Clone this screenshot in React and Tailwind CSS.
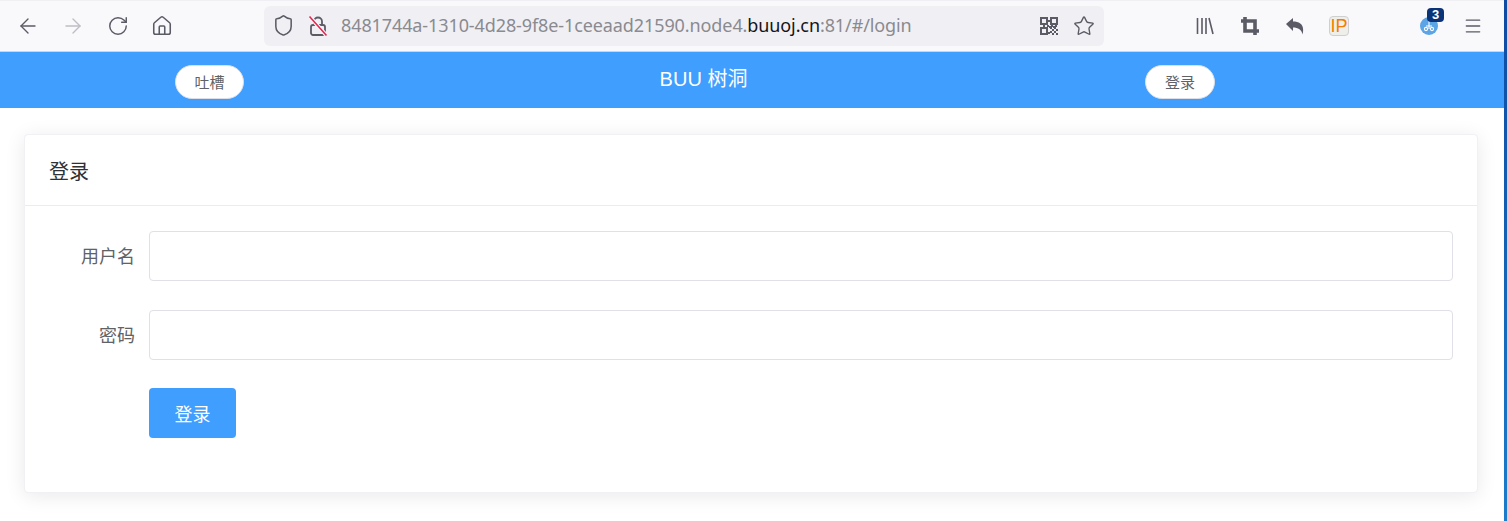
import React from 'react';
import { ArrowLeft, ArrowRight, RotateCw, House, Shield, Star, Menu } from 'lucide-react';

const cjk = "font-['Noto_Sans_CJK_SC','Noto_Sans',sans-serif]";

function LockOff() {
  return (
    <svg width="20" height="22" viewBox="0 0 20 22" fill="none">
      <path d="M6 9V6.5a4 4 0 0 1 8 0V9" stroke="#5b5b66" strokeWidth="1.8" />
      <rect x="3" y="10" width="14" height="10" rx="2" stroke="#5b5b66" strokeWidth="1.8" />
      <path d="M2 2l16 18" stroke="#f7f7fa" strokeWidth="4" />
      <path d="M1.5 1.5l17 19" stroke="#e22850" strokeWidth="1.6" />
    </svg>
  );
}

function QrCode() {
  return (
    <svg width="18" height="18" viewBox="0 0 18 18" fill="#5b5b66">
      <path fillRule="evenodd" d="M0 0h8v8H0zM2 2v4h4V2zM10 0h8v8h-8zM12 2v4h4V2zM0 10h8v8H0zM2 12v4h4v-4z" />
      <path d="M8 3h2v2H8zM3 8h2v2H3zM7 8h2v2H7zM11 8h2v2h-2zM15 8h2v2h-2zM9 9h2v2H9zM13 9h2v2h-2zM10 10h2v2h-2zM14 10h2v2h-2zM12 12h2v2h-2zM16 12h2v2h-2zM10 14h2v2h-2zM14 14h2v2h-2zM12 16h2v2h-2zM16 16h2v2h-2zM8 15h2v2H8z" />
    </svg>
  );
}

function Library() {
  return (
    <svg width="18" height="18" viewBox="0 0 18 18" fill="none" stroke="#5b5b66" strokeWidth="1.6">
      <path d="M1.5 1v16M6 1v16M10 1v16M13 1l4 16" />
    </svg>
  );
}

function Crop() {
  return (
    <svg width="18" height="18" viewBox="0 0 18 18" fill="none" stroke="#5b5b66" strokeWidth="3.6">
      <path d="M0 4h14v14M4 0v14h14" />
    </svg>
  );
}

function Back() {
  return (
    <svg width="18" height="18" viewBox="0 0 18 18" fill="#5b5b66">
      <path d="M0 7L7 1v3.500C14 4.500 19 8 16.500 17.500 16 13 12 10.500 7 10.500V14z" />
    </svg>
  );
}

function Extension() {
  return (
    <div className="relative w-[18px] h-[18px] rounded-full bg-[#5ba4e6]">
      <svg width="18" height="18" viewBox="0 0 18 18" fill="none" stroke="#ffffff" strokeWidth="1.1">
        <path d="M9 4v8M6 9h6" />
        <circle cx="6" cy="12" r="1.600" />
        <circle cx="12" cy="12" r="1.600" />
      </svg>
      <span className="absolute -top-[9px] left-[7px] w-[17px] h-[14px] rounded-sm bg-[#0b3478] text-white text-[13px] leading-[14px] font-bold text-center font-['Liberation_Sans',sans-serif]">3</span>
    </div>
  );
}

function Toolbar() {
  return (
    <div className="h-[52px] flex items-center bg-[#f9f9fb] border-t border-t-[#f0f0f4] border-b border-b-[#d4d4d8] text-[#5b5b66]">
      <div className="w-[264px] flex items-center pl-[16px] gap-[21px] shrink-0">
        <ArrowLeft size={24} strokeWidth={1.4} />
        <ArrowRight size={24} strokeWidth={1.4} className="text-[#bdbdc4]" />
        <RotateCw size={22} strokeWidth={1.6} className="ml-[1px]" />
        <House size={22} strokeWidth={1.7} className="ml-[1px]" />
      </div>
      <div className="w-[840px] h-[40px] -mt-[1px] bg-[#f0f0f4] rounded-md flex items-center shrink-0">
        <Shield size={23} strokeWidth={1.6} className="ml-[8px]" />
        <div className="ml-[13px] flex"><LockOff /></div>
        <div className="ml-[13px] text-[18px] whitespace-nowrap text-[#8a8a90] font-['Noto_Sans',sans-serif] tracking-[-0.1px]">
          8481744a-1310-4d28-9f8e-1ceeaad21590.node4.<span className="text-[#15141a]">buuoj.cn</span>:81/#/login
        </div>
        <div className="ml-auto mr-[9px] flex items-center gap-[15px]">
          <QrCode />
          <Star size={22} strokeWidth={1.5} />
        </div>
      </div>
      <div className="flex items-center pl-[92px] gap-[27px]">
        <Library />
        <Crop />
        <Back />
        <div className="-ml-[2px] w-[20px] h-[20px] rounded-sm border border-[#cfcfcf] bg-[#efefe9] flex items-center justify-center text-[#f57c00] text-[18px] leading-none font-['Liberation_Sans',sans-serif]">IP</div>
      </div>
      <div className="ml-[71px]"><Extension /></div>
      <Menu size={20} strokeWidth={1.6} className="ml-[25px]" />
    </div>
  );
}

function PillButton({ children, className }) {
  return (
    <button className={`h-[34px] rounded-[17px] bg-white border border-[#dcdfe6] text-[15px] text-[#606266] shrink-0 ${className}`}>
      {children}
    </button>
  );
}

function Field({ label }) {
  return (
    <div className="flex items-center">
      <label className="w-[110px] pr-[14px] text-right text-[18px] -mt-[2px] text-[#606266] shrink-0">{label}</label>
      <input className="flex-1 h-[50px] bg-white border border-[#dfe0e8] rounded-[4px] outline-none" />
    </div>
  );
}

export default function App() {
  return (
    <div className={`w-[1507px] h-[521px] overflow-hidden bg-white flex ${cjk}`}>
      <div className="w-[1504px] shrink-0">
        <Toolbar />
        <div className="h-[56px] bg-[#409eff] flex items-center">
          <PillButton className="w-[69px] ml-[175px] mt-[4px]">吐槽</PillButton>
          <div className="w-[901px] pl-[18px] text-center text-white text-[20px] font-['Liberation_Sans','Noto_Sans_CJK_SC',sans-serif] -mt-[2px]">BUU 树洞</div>
          <PillButton className="w-[70px] mt-[4px]">登录</PillButton>
        </div>
        <div className="pt-[26px] pl-[24px] pr-[26px]">
          <div className="h-[359px] bg-white border border-[#f0f0f5] rounded-[4px] shadow-[0_3px_20px_0_rgba(0,0,0,0.09)]">
            <div className="h-[71px] px-[24px] pt-[1px] border-b border-[#ebebf3] flex items-center text-[20px] text-[#303133]">登录</div>
            <div className="pt-[25px] pl-[14px] pr-[24px] flex flex-col gap-[29px]">
              <Field label="用户名" />
              <Field label="密码" />
              <div className="pl-[110px] -mt-[1px]">
                <button className="w-[87px] h-[50px] bg-[#409eff] rounded-[4px] text-white text-[18px]">登录</button>
              </div>
            </div>
          </div>
        </div>
      </div>
      <div className="w-[3px] bg-linear-to-b from-[#0f4aa3] to-[#1b7ccb]" />
    </div>
  );
}
